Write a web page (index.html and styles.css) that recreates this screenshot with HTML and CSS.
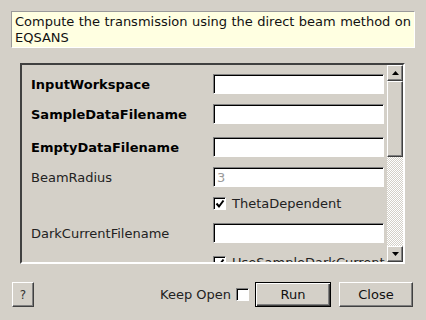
FILE: index.html
```
<!DOCTYPE html>
<html lang="en">
<head>
  <meta charset="UTF-8">
  <meta name="viewport" content="width=device-width, initial-scale=1.0">
  <title>Algorithm Dialog</title>
  <link rel="stylesheet" href="styles.css">
</head>
<body>
  <div class="description">Compute the transmission using the direct beam method on EQSANS</div>

  <div class="frame">
    <div class="props">
      <div class="row first">
        <span class="label bold">InputWorkspace</span>
        <input type="text" class="field">
      </div>
      <div class="row">
        <span class="label bold">SampleDataFilename</span>
        <input type="text" class="field">
      </div>
      <div class="row tall">
        <span class="label bold">EmptyDataFilename</span>
        <input type="text" class="field">
      </div>
      <div class="row">
        <span class="label">BeamRadius</span>
        <input type="text" class="field" value="3" disabled>
      </div>
      <div class="row check-row">
        <span class="label"></span>
        <span class="check-label"><span class="box checked"><svg width="10" height="10" viewBox="0 0 10 10"><path d="M1.5 4.5 L4 7.5 L8.5 1.5" fill="none" stroke="#000" stroke-width="2"/></svg></span>ThetaDependent</span>
      </div>
      <div class="row">
        <span class="label">DarkCurrentFilename</span>
        <input type="text" class="field">
      </div>
      <div class="row check-row low">
        <span class="label"></span>
        <span class="check-label"><span class="box checked"><svg width="10" height="10" viewBox="0 0 10 10"><path d="M1.5 4.5 L4 7.5 L8.5 1.5" fill="none" stroke="#000" stroke-width="2"/></svg></span>UseSampleDarkCurrent</span>
      </div>
    </div>
    <div class="scrollbar">
      <div class="arrow"><svg width="7" height="4" viewBox="0 0 7 4"><path d="M0 4 L3.5 0 L7 4 Z" fill="#000"/></svg></div>
      <div class="slider"></div>
      <div class="trough"></div>
      <div class="arrow"><svg width="7" height="4" viewBox="0 0 7 4"><path d="M0 0 L3.5 4 L7 0 Z" fill="#000"/></svg></div>
    </div>
  </div>

  <div class="buttons">
    <button class="btn help">?</button>
    <span class="spacer"></span>
    <span class="keep-open">Keep Open<span class="box"></span></span>
    <button class="btn run">Run</button>
    <button class="btn close">Close</button>
  </div>
</body>
</html>
```

FILE: styles.css
```
body {
  background-color: #d4d0c8;
  font-family: 'DejaVu Sans', sans-serif;
  font-size: 13px;
  color: #111;
  margin: 0;
  padding: 11px 0 0 0;
}
.description {
  margin-left: 11px;
  width: 396px;
  background-color: #ffffe1;
  border: 1px solid;
  border-color: #9a9a9a #fff #fff #9a9a9a;
  padding: 2px 3px 1px 3px;
  line-height: 16px;
  text-align: justify;
}
.frame {
  margin: 15px 0 0 20px;
  width: 381px;
  height: 197px;
  border: 2px solid;
  border-color: #404040 #fff #fff #404040;
  display: flex;
  overflow: hidden;
}
.props {
  flex: 1;
  display: flex;
  flex-direction: column;
  padding-left: 9px;
}
.row {
  display: grid;
  grid-template-columns: 182px 171px;
  align-items: center;
  height: 20px;
  margin-top: 10px;
  flex-shrink: 0;
}
.row.first {
  margin-top: 9px;
}
.row.tall {
  margin-top: 13px;
}
.row.check-row {
  margin-top: 6px;
}
.row.low {
  margin-top: 9px;
}
.label {
  white-space: nowrap;
  color: #222;
  padding-top: 1px;
}
.bold {
  font-weight: bold;
  color: #000;
}
.field {
  box-sizing: border-box;
  height: 20px;
  width: 171px;
  margin: 0;
  padding: 0 3px;
  font-family: 'DejaVu Sans', sans-serif;
  font-size: 13px;
  background: #fff;
  border: 1px solid;
  border-color: #808080 #fff #fff #808080;
  box-shadow: inset 1px 1px 0 #000;
}
.field:disabled {
  color: #9a9a9a;
}
.check-label {
  display: flex;
  align-items: center;
  white-space: nowrap;
  color: #222;
}
.box {
  box-sizing: border-box;
  display: inline-flex;
  align-items: center;
  justify-content: center;
  width: 13px;
  height: 13px;
  background: #fff;
  border: 1px solid;
  border-color: #808080 #fff #fff #808080;
  box-shadow: inset 1px 1px 0 #000;
  margin-right: 6px;
}
.box svg {
  margin: 1px 0 0 1px;
}
.scrollbar {
  width: 16px;
  display: flex;
  flex-direction: column;
}
.arrow {
  box-sizing: border-box;
  height: 16px;
  display: flex;
  align-items: center;
  justify-content: center;
  background: #d4d0c8;
  border: 1px solid;
  border-color: #fff #404040 #404040 #fff;
  box-shadow: inset -1px -1px 0 #808080;
}
.slider {
  box-sizing: border-box;
  height: 76px;
  background: #d4d0c8;
  border: 1px solid;
  border-color: #fff #404040 #404040 #fff;
  box-shadow: inset -1px -1px 0 #808080;
}
.trough {
  flex: 1;
  background-color: #fff;
  background-image: repeating-conic-gradient(#d4d0c8 0 25%, #fff 0 50%);
  background-size: 2px 2px;
}
.buttons {
  display: flex;
  align-items: center;
  margin: 18px 13px 0 12px;
}
.spacer {
  flex: 1;
}
.btn {
  box-sizing: border-box;
  height: 25px;
  font-family: 'DejaVu Sans', sans-serif;
  font-size: 13px;
  color: #111;
  background: #d4d0c8;
  border: 1px solid;
  border-color: #fff #404040 #404040 #fff;
  box-shadow: inset -1px -1px 0 #808080;
  padding: 0;
}
.help {
  width: 22px;
  font-size: 12px;
  color: #333;
}
.keep-open {
  display: flex;
  align-items: center;
  color: #222;
}
.keep-open .box {
  margin: 0 0 0 5px;
}
.run {
  width: 76px;
  margin-left: 6px;
  border-color: #000;
  box-shadow: inset 1px 1px 0 #fff, inset -1px -1px 0 #404040, inset -2px -2px 0 #808080;
}
.close {
  width: 74px;
  margin-left: 8px;
}
```
